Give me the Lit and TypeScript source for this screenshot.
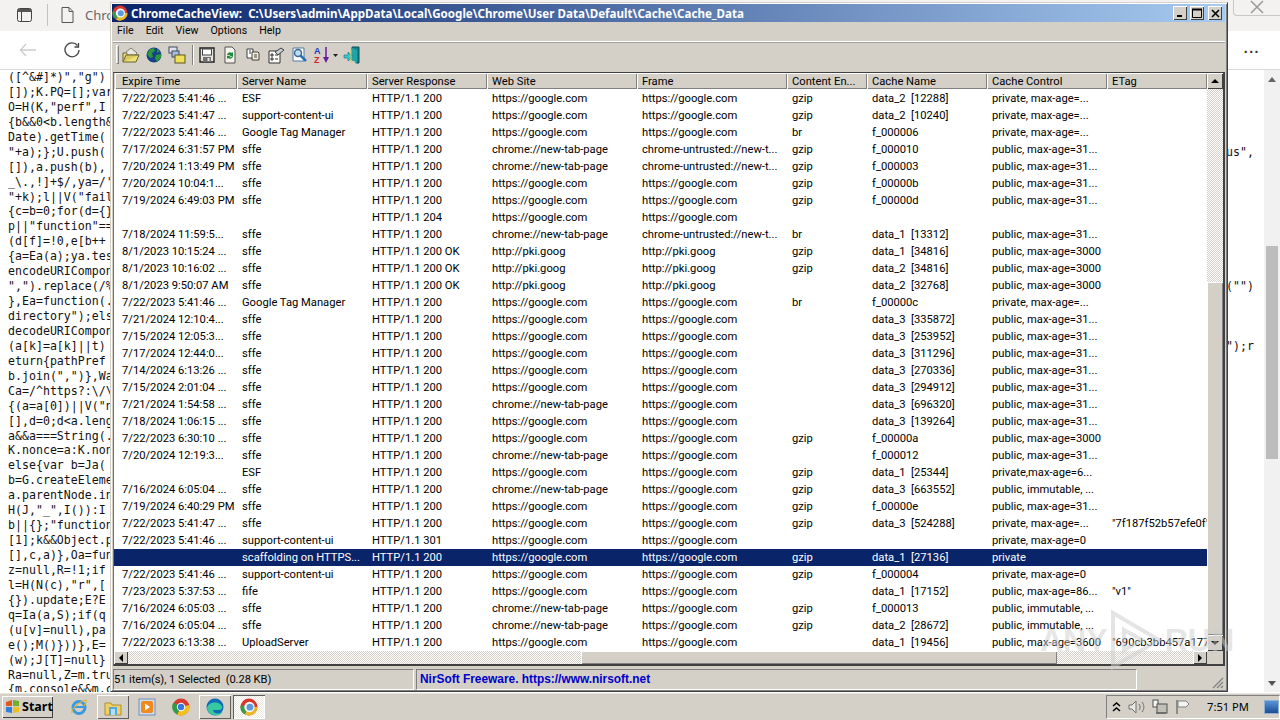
import { LitElement, html, css, svg } from "lit";
import { customElement } from "lit/decorators.js";

const G = "https://google.com";
const NT = "chrome://new-tab-page";
const UT = "chrome-untrusted://new-t...";
const PK = "http://pki.goog";
const P31 = "public, max-age=31...";
const PV = "private, max-age=...";
const P3K = "public, max-age=3000";
const IM = "public, immutable, ...";
const R = "HTTP/1.1 200";
const ROK = "HTTP/1.1 200 OK";

type Row = string[];
const rows: Row[] = [
  ["7/22/2023 5:41:46 ...", "ESF", R, G, G, "gzip", "data_2  [12288]", PV, ""],
  ["7/22/2023 5:41:47 ...", "support-content-ui", R, G, G, "gzip", "data_2  [10240]", PV, ""],
  ["7/22/2023 5:41:46 ...", "Google Tag Manager", R, G, G, "br", "f_000006", PV, ""],
  ["7/17/2024 6:31:57 PM", "sffe", R, NT, UT, "gzip", "f_000010", P31, ""],
  ["7/20/2024 1:13:49 PM", "sffe", R, NT, UT, "gzip", "f_000003", P31, ""],
  ["7/20/2024 10:04:1...", "sffe", R, G, G, "gzip", "f_00000b", P31, ""],
  ["7/19/2024 6:49:03 PM", "sffe", R, G, G, "gzip", "f_00000d", P31, ""],
  ["", "", "HTTP/1.1 204", G, G, "", "", "", ""],
  ["7/18/2024 11:59:5...", "sffe", R, NT, UT, "br", "data_1  [13312]", P31, ""],
  ["8/1/2023 10:15:24 ...", "sffe", ROK, PK, PK, "gzip", "data_1  [34816]", P3K, ""],
  ["8/1/2023 10:16:02 ...", "sffe", ROK, PK, PK, "gzip", "data_2  [34816]", P3K, ""],
  ["8/1/2023 9:50:07 AM", "sffe", ROK, PK, PK, "", "data_2  [32768]", P3K, ""],
  ["7/22/2023 5:41:46 ...", "Google Tag Manager", R, G, G, "br", "f_00000c", PV, ""],
  ["7/21/2024 12:10:4...", "sffe", R, G, G, "", "data_3  [335872]", P31, ""],
  ["7/15/2024 12:05:3...", "sffe", R, G, G, "", "data_3  [253952]", P31, ""],
  ["7/17/2024 12:44:0...", "sffe", R, G, G, "", "data_3  [311296]", P31, ""],
  ["7/14/2024 6:13:26 ...", "sffe", R, G, G, "", "data_3  [270336]", P31, ""],
  ["7/15/2024 2:01:04 ...", "sffe", R, G, G, "", "data_3  [294912]", P31, ""],
  ["7/21/2024 1:54:58 ...", "sffe", R, NT, G, "", "data_3  [696320]", P31, ""],
  ["7/18/2024 1:06:15 ...", "sffe", R, G, G, "", "data_3  [139264]", P31, ""],
  ["7/22/2023 6:30:10 ...", "sffe", R, G, G, "gzip", "f_00000a", P3K, ""],
  ["7/20/2024 12:19:3...", "sffe", R, NT, G, "", "f_000012", P31, ""],
  ["", "ESF", R, G, G, "gzip", "data_1  [25344]", "private,max-age=6...", ""],
  ["7/16/2024 6:05:04 ...", "sffe", R, NT, G, "gzip", "data_3  [663552]", IM, ""],
  ["7/19/2024 6:40:29 PM", "sffe", R, G, G, "gzip", "f_00000e", P31, ""],
  ["7/22/2023 5:41:47 ...", "sffe", R, G, G, "gzip", "data_3  [524288]", PV, '"7f187f52b57efe0f"'],
  ["7/22/2023 5:41:46 ...", "support-content-ui", "HTTP/1.1 301", G, G, "", "", "private, max-age=0", ""],
  ["", "scaffolding on HTTPS...", R, G, G, "gzip", "data_1  [27136]", "private", ""],
  ["7/22/2023 5:41:46 ...", "support-content-ui", R, G, G, "gzip", "f_000004", "private, max-age=0", ""],
  ["7/23/2023 5:37:53 ...", "fife", R, G, G, "", "data_1  [17152]", "public, max-age=86...", '"v1"'],
  ["7/16/2024 6:05:03 ...", "sffe", R, NT, G, "gzip", "f_000013", IM, ""],
  ["7/16/2024 6:05:04 ...", "sffe", R, NT, G, "gzip", "data_2  [28672]", IM, ""],
  ["7/22/2023 6:13:38 ...", "UploadServer", R, G, G, "", "data_1  [19456]", "public, max-age=3600", '"690cb3bb457a177'],
];
const heads = ["Expire Time", "Server Name", "Server Response", "Web Site", "Frame", "Content En...", "Cache Name", "Cache Control", "ETag"];

const code: [string, string?][] = [
  ['([^&#]*)","g")'], ["[]);K.PQ=[];var "], ['O=H(K,"perf",I '], ["{b&&0<b.length&&"], ["Date).getTime("],
  ['"+a);};U.push(', 'us",'], ["[]),a.push(b),"], ["_\\.,!]+$/,ya=/'"], ['"+k);l||V("fail'], ["{c=b=0;for(d={}"],
  ['p||"function"=='], ["(d[f]=!0,e[b++"], ["{a=Ea(a);ya.test"], ["encodeURICompone"], ['",").replace(/%', '("")'],
  ["},Ea=function(."], ['directory");els'], ["decodeURICompone"], ["(a[k]=a[k]||t)", '");r'], ["eturn{pathPref"],
  ['b.join(",")},Wa'], ["Ca=/^https?:\\/\\"], ['{(a=a[0])||V("n'], ["[],d=0;d<a.leng"], ["a&&a===String(."],
  ["K.nonce=a:K.nonc"], ["else{var b=Ja("], ["b=G.createEleme"], ["a.parentNode.in"], ['H(J,"_",I()):I'],
  ['b||{};"function'], ["[1];k&&Object.p"], ["[],c,a)},Oa=fun"], ["z=null,R=!1;if"], ['l=H(N(c),"r",['],
  ["{}).update;E?E"], ["q=Ia(a,S);if(q"], ["(u[v]=null),pa"], ["e();M()}))},E="], ["(w);J[T]=null}"],
  ["Ra=null,Z=m.tru"], ["{m.console&&m.c"],
];

const appIcon = (s: number) => html`<svg width=${s} height=${s} viewBox="0 0 16 16">
  <circle cx="8" cy="8" r="7.5" fill="#d8382c"/>
  <path d="M8 8 L15.5 8 A7.5 7.5 0 0 1 4 14.4Z" fill="#e8b828"/>
  <path d="M8 8 L4 14.4 A7.5 7.5 0 0 1 .6 6.5Z" fill="#3c9a48"/>
  <circle cx="8.4" cy="8" r="4.6" fill="#f4f8fc"/><circle cx="8.8" cy="8.2" r="3" fill="#5b9bdc"/></svg>`;

const tool = (p: unknown, w = 18) => html`<svg class="ti" width=${w} height="18" viewBox="0 0 ${w} 18">${p}</svg>`;
const tools = {
  open: svg`<path d="M1 7h5l1-1h6v3h4l-3 7H1z" fill="#f0e070" stroke="#6a6238"/><path d="M4 6l5-4 6 5-2 2H6z" fill="#e8e8e0" stroke="#807c70"/><path d="M1 16l3-7h13" fill="#d8c860" stroke="#6a6238"/>`,
  globe: svg`<circle cx="9" cy="9" r="7.500" fill="#16408c"/><path d="M5 3l4-1 1 3-3 2 1 4-3 1-3-4zM11 9l5-1 0 3-4 5-2-4z" fill="#2c9a3c"/><path d="M12 3l3 2-3 2z" fill="#2c9a3c"/>`,
  folders: svg`<rect x="1" y="1" width="8" height="6" fill="#e0e4ec" stroke="#404860"/><rect x="4" y="5" width="7" height="6" fill="#a8c0e0" stroke="#404860"/><rect x="7" y="9" width="10" height="8" fill="#f0e058" stroke="#5a5420"/>`,
  save: svg`<path d="M2 2h14v14H2z" fill="#e4e4e0" stroke="#202020" stroke-width="1.400"/><rect x="4.500" y="3" width="9" height="6" fill="#fff" stroke="#404040"/><rect x="5" y="11" width="8" height="5" fill="#707070"/><rect x="9.500" y="12" width="2" height="3" fill="#e0e0e0"/>`,
  refresh: svg`<path d="M4 1h7l3 3v13H4z" fill="#f4f4ec" stroke="#505050"/><path d="M6 9a3 3 0 0 1 5-2l1-1v4H8l1.500-1A2 2 0 0 0 7 9.500zM12 10a3 3 0 0 1-5 2l-1 1V10h4l-1.500 1a2 2 0 0 0 2.500-1z" fill="#1c8c3c"/>`,
  copy: svg`<path d="M3 3h6v9H3z" fill="#fff" stroke="#404040"/><path d="M8 6h6l1 1v7H8z" fill="#f4f0d8" stroke="#404040"/><path d="M5 5h2M5 7h2M10 9h3M10 11h3" stroke="#404040"/>`,
  prop: svg`<path d="M2 5h11v12H2z" fill="#fff" stroke="#303030"/><path d="M4 8h2v2H4zM4 12h2v2H4zM8 9h3M8 13h3" stroke="#303030" fill="none"/><path d="M8 6l6-4 3 2-6 5z" fill="#c8ccd4" stroke="#404040"/>`,
  find: svg`<path d="M3 2h11v13H3z" fill="#fff" stroke="#5078a8"/><circle cx="8" cy="7" r="3.500" fill="#bce0f4" stroke="#406890" stroke-width="1.500"/><path d="M10.500 9.500L16 15" stroke="#2870b8" stroke-width="2.500"/>`,
  sort: svg`<text x="1" y="8" class="az1">A</text><text x="1" y="17" class="az2">Z</text><path d="M13 1v13" stroke="#6a1c9a" stroke-width="1.500"/><path d="M10 11l3 6 3-6z" fill="#6a1c9a"/>`,
  drop: svg`<path d="M0 8h5l-2.500 3z" fill="#202020"/>`,
  exit: svg`<path d="M9 1h7v16h-3v-3h-4z" fill="#188088" stroke="#0c5058"/><path d="M9 2l5 2v13l-5-3z" fill="#20a4a8"/><path d="M1 9h4V6l5 4.500L5 15v-3H1z" fill="#38c8d0" stroke="#187078" stroke-width=".6"/><path d="M8 4v12" stroke="#d8c838"/>`,
};

@customElement("app-root")
export class AppRoot extends LitElement {
  static styles = css`
    :host { display: block; width: 1280px; height: 720px; overflow: hidden; position: relative; background: #fff; }
    * { box-sizing: border-box; }
    .desk { width: 1280px; height: 720px; display: flex; flex-direction: column; position: relative; }
    .browser { height: 692px; display: flex; flex-direction: column; background: #fff; overflow: hidden; }
    .tabs { height: 31px; background: #f3f2f1; display: flex; align-items: center; padding-left: 17px; padding-bottom: 1px; flex: none; position: relative; }
    .vsep { width: 1px; height: 22px; background: #c0c0c0; margin: 0 13px 0 15px; }
    .tabt { font: 13px "Noto Sans", sans-serif; color: #666; margin-left: 11px; }
    .closebox { position: absolute; left: 1233px; top: 0; width: 47px; height: 16px; border: 1px solid #c8c8c8; border-top: none; border-right: none; border-radius: 0 0 0 4px; background: #f3f2f1; display: flex; justify-content: center; }
    .nav { height: 39px; flex: none; background: #fff; border-bottom: 1px solid #d9d9d9; display: flex; align-items: center; padding-left: 19px; justify-content: space-between; padding-right: 20px; }
    .navl { display: flex; align-items: center; gap: 27px; }
    .dots { font: bold 14px "Liberation Sans", sans-serif; color: #333; letter-spacing: 1.5px; margin-top: -4px; }
    .page { flex: 1; display: flex; min-height: 0; }
    .code { flex: 1; overflow: hidden; font: 11.600px/14.95px "DejaVu Sans Mono", monospace; color: #111; white-space: pre; }
    .ln { display: flex; height: 14.95px; }
    .ll { width: 1226px; padding-left: 8px; overflow: hidden; flex: none; }
    .bsb { width: 16px; flex: none; background: #f1f1f1; display: flex; flex-direction: column; align-items: center; }
    .tup { width: 0; height: 0; border: 4.500px solid transparent; border-top: none; border-bottom: 5px solid #666; margin-top: 7px; }
    .tdn { width: 0; height: 0; border: 4.500px solid transparent; border-bottom: none; border-top: 5px solid #555; margin-top: auto; margin-bottom: 6px; }
    .bth { width: 12px; height: 213px; margin-top: 164px; background: #bcbcbc; }

    .win { position: absolute; left: 110px; top: 2px; width: 1118px; height: 690px; background: #d4d0c8; border: 1px solid #404040; border-left-color: #d4d0c8; border-top-color: #d4d0c8; box-shadow: inset 1px 1px 0 #fff, inset -1px -1px 0 #808080; padding: 1px 2px 3px 2px; display: flex; flex-direction: column; font: 11.200px Roboto, sans-serif; color: #000; }
    .title { height: 18px; flex: none; margin-left: -1px; background: linear-gradient(90deg, #0a246a, #a6caf0); display: flex; align-items: center; color: #fff; font: bold 11.600px "Noto Sans", sans-serif; white-space: pre; }
    .title span { margin-left: 3px; flex: 1; }
    .wb { width: 14px; height: 14px; background: #d4d0c8; box-shadow: inset 1px 1px 0 #fff, inset -1px -1px 0 #404040; display: flex; align-items: center; justify-content: center; margin-left: 3px; flex: none; }
    .wb.last { margin: 0 3px 0 4px; }
    .menu { height: 20px; flex: none; display: flex; align-items: center; padding: 0 0 2px 4px; gap: 12px; border-bottom: 1px solid #fff; box-shadow: 0 1px 0 #a0a0a0; font-size: 10.600px; }
    .tbar { height: 23px; flex: none; display: flex; align-items: center; padding-left: 3px; margin-top: 1px; }
    .grip { width: 3px; height: 19px; border: 1px solid; border-color: #fff #808080 #808080 #fff; margin-right: -2px; flex: none; }
    .ti { margin-left: 5px; flex: none; }
    .ti.nm { margin-left: 2px; }
    .tsep { width: 2px; height: 20px; border-left: 1px solid #808080; border-right: 1px solid #fff; margin: 0 -1px 0 6px; flex: none; }
    .az1, .az2 { font: bold 9px "Liberation Sans", sans-serif; }
    .az1 { fill: #2038c0; } .az2 { fill: #d02828; }

    .list { height: 594px; flex: none; margin-top: 6px; border: 1px solid #404040; border-right-width: 2px; border-bottom-width: 2px; border-left-color: #707070; background: #fff; display: flex; flex-direction: column; }
    .hd { height: 16px; flex: none; display: flex; background: #d4d0c8; padding-left: 1px; }
    .hc { flex: none; padding: 1px 0 0 5px; box-shadow: inset 1px 1px 0 #fff, inset -1px -1px 0 #808080; line-height: 16px; overflow: hidden; white-space: pre; }
    .c0 { width: 122px; } .c1 { width: 130px; } .c2 { width: 120px; } .c3, .c4 { width: 150px; }
    .c5 { width: 80px; } .c6, .c7 { width: 120px; } .c8 { width: 100px; }
    .hc.c0 { padding-left: 7px; }
    .sb { width: 16px; height: 16px; flex: none; background: #d4d0c8; box-shadow: inset 1px 1px 0 #fff, inset -1px -1px 0 #404040; display: flex; align-items: center; justify-content: center; }
    .au { width: 0; height: 0; border: 4px solid transparent; border-top: none; border-bottom: 4px solid #000; }
    .ad { width: 0; height: 0; border: 4px solid transparent; border-bottom: none; border-top: 4px solid #000; }
    .al { width: 0; height: 0; border: 4px solid transparent; border-left: none; border-right: 4px solid #000; }
    .ar { width: 0; height: 0; border: 4px solid transparent; border-right: none; border-left: 4px solid #000; }
    .body { flex: 1; min-height: 0; display: flex; }
    .rows { flex: 1; padding-top: 1px; overflow: hidden; padding-left: 1px; }
    .r { height: 17px; display: flex; white-space: pre; line-height: 18px; }
    .r.sel { background: #0a246a; color: #fff; margin-left: -1px; padding-left: 1px; }
    .d { flex: none; padding-left: 5px; overflow: hidden; color: inherit; height: 17px; }
    .d.c0 { padding-left: 7px; }
    .vs { width: 16px; flex: none; display: flex; flex-direction: column; }
    .hatch { background: repeating-conic-gradient(#d4d0c8 0 25%, #fff 0 50%) 0 0 / 2px 2px; }
    .vh { height: 193px; flex: none; }
    .thumb { background: #d4d0c8; box-shadow: inset 1px 1px 0 #fff, inset -1px -1px 0 #808080; }
    .vt { flex: 1; }
    .hs { height: 13px; flex: none; display: flex; background: #d4d0c8; }
    .hs .sb { height: 13px; width: 14px; }
    .h1 { width: 453px; flex: none; } .h2 { width: 476px; flex: none; } .h3 { flex: 1; }
    .corner { width: 16px; flex: none; background: #d4d0c8; }
    .status { flex: 1; display: flex; padding-top: 3px; gap: 2px; position: relative; }
    .st { height: 21px; flex: none; border: 1px solid; border-color: #808080 #fff #fff #808080; line-height: 19px; white-space: pre; }
    .s1 { width: 301px; letter-spacing: -.08px; }
    .s2 { width: 721px; padding-left: 3px; color: #0000c8; font: bold 11.900px/19px "Liberation Sans", sans-serif; }
    .rz { position: absolute; right: 1px; bottom: 1px; }

    .task { height: 28px; flex: none; background: #d4d0c8; display: flex; align-items: center; gap: 2px; border-top: 1px solid #fff; box-shadow: inset 0 1px 0 #e8e4dc; }
    .start { width: 51px; height: 22px; margin: 0 8px 0 2px; display: flex; align-items: center; gap: 2px; padding-left: 3px; font: bold 12.500px "Noto Sans", sans-serif; box-shadow: inset 1px 1px 0 #fff, inset -1px -1px 0 #404040; flex: none; }
    .tbtn { height: 24px; width: 32px; display: flex; align-items: center; justify-content: center; flex: none; }
    .tbtn.up { box-shadow: inset 1px 1px 0 #fff, inset -1px -1px 0 #606060; }
    .tbtn.on { background: repeating-conic-gradient(#fff 0 25%, #ece9e2 0 50%) 0 0 / 2px 2px; box-shadow: inset 1px 1px 0 #606060, inset -1px -1px 0 #fff; }
    .tray { margin-left: auto; width: 174px; height: 24px; display: flex; align-items: center; gap: 7px; padding-left: 5px; border: 1px solid; border-color: #808080 #fff #fff #808080; font: 11.200px "Noto Sans", sans-serif; }
    .time { margin-left: 9px; width: 50px; flex: none; white-space: pre; }
    .showd { width: 15px; height: 14px; background: linear-gradient(180deg, #5a94d8, #1c4c94); border: 1px solid #90b0d0; flex: none; }

    .wm { position: absolute; left: 1040px; top: 610px; width: 194px; height: 60px; display: flex; align-items: center; justify-content: space-between; color: rgba(205,205,205,.5); font: bold 32px "Liberation Sans", sans-serif; pointer-events: none; }
    .wm svg { flex: none; }
  `;

  render() {
    return html`<div class="desk">
      <div class="browser">
        <div class="tabs">
          <svg width="15" height="14" viewBox="0 0 15 14"><rect x=".5" y=".5" width="14" height="13" rx="2" fill="none" stroke="#444"/><path d="M1 1h13v3H1z" fill="#555"/><path d="M4.500 4v9" stroke="#444"/></svg>
          <div class="vsep"></div>
          <svg width="13" height="16" viewBox="0 0 13 16"><path d="M1 .5h7l4 4v11H1zM8 .5v4h4" fill="none" stroke="#555"/></svg>
          <span class="tabt">Chrome</span>
          <div class="closebox"><svg width="14" height="14" viewBox="0 0 14 14"><path d="M1 1l12 12M13 1L1 13" stroke="#999" stroke-width="1.500" fill="none"/></svg></div>
        </div>
        <div class="nav">
          <div class="navl">
            <svg width="18" height="14" viewBox="0 0 18 14"><path d="M17 7H2M7 1L1.500 7 7 13" fill="none" stroke="#ccc" stroke-width="1.300"/></svg>
            <svg width="16" height="16" viewBox="0 0 16 16"><path d="M13.500 3.500A7 7 0 1 0 15 8" fill="none" stroke="#444" stroke-width="1.300"/><path d="M14.500 1v4h-4" fill="none" stroke="#444" stroke-width="1.300"/></svg>
          </div>
          <span class="dots">...</span>
        </div>
        <div class="page">
          <div class="code">${code.map(([l, r]) => html`<div class="ln"><div class="ll">${l}</div><div>${r ?? ""}</div></div>`)}</div>
          <div class="bsb"><div class="tup"></div><div class="bth"></div><div class="tdn"></div></div>
        </div>
      </div>
      <div class="task">
        <div class="start">
          <svg width="15" height="15" viewBox="0 0 15 15"><path d="M1 3l6-2v6H1z" fill="#e05a20"/><path d="M8 1l6 1v5H8z" fill="#70b030"/><path d="M1 8h6v6l-6-1z" fill="#3080d8"/><path d="M8 8h6v5l-6 1z" fill="#f0c020"/></svg>
          Start
        </div>
        <div class="tbtn"><svg width="18" height="18" viewBox="0 0 18 18"><circle cx="9" cy="9.500" r="6" fill="none" stroke="#3a9ae0" stroke-width="3"/><path d="M5 9h9" stroke="#3a9ae0" stroke-width="2"/><path d="M2 15C1 11 10 3 16 2c1 2-1 4-2 6" fill="none" stroke="#e0b030" stroke-width="1.200"/></svg></div>
        <div class="tbtn up"><svg width="18" height="18" viewBox="0 0 18 18"><path d="M1 5h6l1 2h9v10H1z" fill="#f0d060" stroke="#b09030"/><rect x="5" y="9" width="8" height="8" fill="#58a8e0"/><rect x="7" y="11" width="4" height="6" fill="#b0e0f8"/></svg></div>
        <div class="tbtn"><svg width="18" height="18" viewBox="0 0 18 18"><rect x="1" y="1" width="16" height="16" fill="#cfdcec" stroke="#7090b8"/><rect x="3" y="3" width="12" height="12" rx="2" fill="#f08a20"/><path d="M7 5.500l5 3.500-5 3.500z" fill="#fff"/></svg></div>
        <div class="tbtn"><svg width="18" height="18" viewBox="0 0 18 18"><circle cx="9" cy="9" r="8.500" fill="#d93a2e"/><path d="M9 9L17.300 7A8.500 8.500 0 0 1 5 16.500z" fill="#f4c020"/><path d="M9 9L5 16.500A8.500 8.500 0 0 1 1.500 4.500z" fill="#2c9e48"/><circle cx="9" cy="9" r="4.200" fill="#fff"/><circle cx="9" cy="9" r="3.200" fill="#3a78e0"/></svg></div>
        <div class="tbtn up"><svg width="18" height="18" viewBox="0 0 18 18"><circle cx="9" cy="9" r="8.500" fill="#0c6cb8"/><path d="M1 10C2 5 9 3 14 6c3 2 3 6-1 6H7c0 3 5 5 10 2-2 3-6 4-9 3-4-1-7-4-7-7z" fill="#38c8a0"/></svg></div>
        <div class="tbtn on">${appIcon(18)}</div>
        <div class="tray">
          <svg width="9" height="12" viewBox="0 0 9 12"><path d="M1 5l3.500-3L8 5M1 10l3.500-3L8 10" fill="none" stroke="#000" stroke-width="1.500"/></svg>
          <svg width="17" height="14" viewBox="0 0 17 14"><path d="M1 5h3l4-4v12L4 9H1z" fill="#e8e8e4" stroke="#707070"/><path d="M11 4c1.500 2 1.500 4 0 6M14 2c2.500 3 2.500 7 0 10" fill="none" stroke="#707070"/></svg>
          <svg width="16" height="16" viewBox="0 0 16 16"><rect x="1" y="1" width="5" height="7" fill="#f4f4f0" stroke="#505050"/><rect x="5" y="5" width="10" height="9" fill="#c0c0b8" stroke="#505050"/><path d="M4 14h10" stroke="#505050"/></svg>
          <svg width="16" height="16" viewBox="0 0 16 16"><path d="M2 1v14" stroke="#606060" stroke-width="1.200"/><path d="M3 2h8l3 3-3 3H3z" fill="#f4f4f0" stroke="#808080"/></svg>
          <span class="time">7:51 PM</span>
          <div class="showd"></div>
        </div>
      </div>
      <div class="win">
        <div class="title">${appIcon(16)}<span>ChromeCacheView:  C:\\Users\\admin\\AppData\\Local\\Google\\Chrome\\User Data\\Default\\Cache\\Cache_Data</span>
          <div class="wb"><svg width="8" height="8" viewBox="0 0 8 8"><path d="M1 7h5" stroke="#000" stroke-width="2"/></svg></div>
          <div class="wb"><svg width="10" height="10" viewBox="0 0 10 10"><path d="M.5 1.500h9v8h-9z" fill="none" stroke="#000"/><path d="M0 1.500h10" stroke="#000" stroke-width="2"/></svg></div>
          <div class="wb last"><svg width="9" height="9" viewBox="0 0 9 9"><path d="M1 1l7 7M8 1L1 8" stroke="#000" stroke-width="1.600"/></svg></div>
        </div>
        <div class="menu"><span>File</span><span>Edit</span><span>View</span><span>Options</span><span>Help</span></div>
        <div class="tbar">
          <div class="grip"></div>
          ${tool(tools.open)}${tool(tools.globe)}${tool(tools.folders)}
          <div class="tsep"></div>
          ${tool(tools.save)}${tool(tools.refresh)}${tool(tools.copy)}${tool(tools.prop)}${tool(tools.find)}${tool(tools.sort)}
          <svg class="ti nm" width="5" height="18" viewBox="0 0 5 18">${tools.drop}</svg>${tool(tools.exit)}
        </div>
        <div class="list">
          <div class="hd">
            ${heads.map((h, i) => html`<div class="hc c${i}">${h}</div>`)}
            <div class="sb"><div class="au"></div></div>
          </div>
          <div class="body">
            <div class="rows">
              ${rows.map((r, i) => html`<div class="r ${i === 27 ? "sel" : ""}">${r.map((c, j) => html`<div class="d c${j}">${c}</div>`)}</div>`)}
            </div>
            <div class="vs">
              <div class="hatch vh"></div>
              <div class="thumb vt"></div>
              <div class="sb"><div class="ad"></div></div>
            </div>
          </div>
          <div class="hs">
            <div class="sb"><div class="al"></div></div>
            <div class="hatch h1"></div>
            <div class="thumb h2"></div>
            <div class="hatch h3"></div>
            <div class="sb"><div class="ar"></div></div>
            <div class="corner"></div>
          </div>
        </div>
        <div class="status">
          <div class="st s1">51 item(s), 1 Selected  (0.28 KB)</div>
          <div class="st s2">NirSoft Freeware. https://www.nirsoft.net</div>
          <svg class="rz" width="12" height="12" viewBox="0 0 12 12"><path d="M11 1L1 11M11 5l-6 6M11 9l-2 2" stroke="#808080" stroke-width="1.300"/></svg>
        </div>
      </div>
      <div class="wm"><span>ANY</span>
        <svg width="52" height="60" viewBox="0 0 52 60"><path d="M3 3l46 27L3 57zM14 20l18 10-18 10z" fill="none" stroke="rgba(205,205,205,.55)" stroke-width="4"/></svg>
        <span>RUN</span></div>
    </div>`;
  }
}
